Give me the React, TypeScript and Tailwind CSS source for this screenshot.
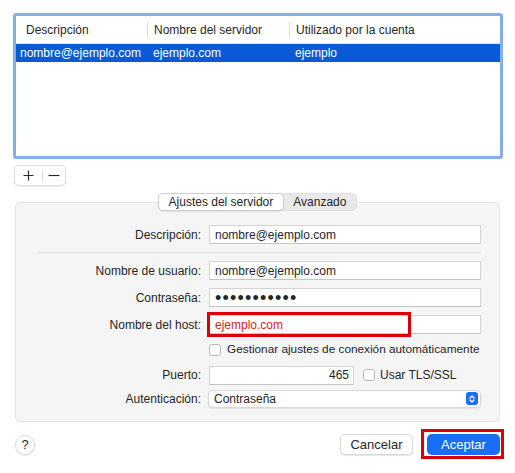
import React from 'react';

const inputCls =
  'h-[19px] bg-white border border-[#d4d4d4] border-b-[#c4c4c4] px-[5px] flex items-center text-[12px] text-[#262626]';

const Row: React.FC<{ label: string; className?: string; children: React.ReactNode }> = ({ label, className = '', children }) => (
  <div className={`flex items-center ${className}`}>
    <div className="w-[193px] text-right pr-[8px] text-[12px] text-[#262626]">{label}</div>
    {children}
  </div>
);

const Checkbox: React.FC = () => (
  <span className="w-[12px] h-[12px] bg-white border border-[#b8b8b8] rounded-[3px] shrink-0" />
);

export default function App() {
  return (
    <div
      className="w-[515px] h-[473px] bg-white text-[#262626] overflow-hidden"
      style={{ fontFamily: '"Liberation Sans", Arial, sans-serif' }}
    >
      {/* accounts table */}
      <div className="pt-[13px] pl-[13px]">
        <div className="w-[490px] h-[146px] border-[3px] border-[#86aeea] rounded-[3px] bg-white">
          <div className="h-[28px] flex items-center border-b border-[#e2e2e2] text-[12px]">
            <div className="w-[131px] pl-[10px]">Descripción</div>
            <div className="w-px h-[16px] bg-[#dcdcdc]" />
            <div className="w-[141px] pl-[6px]">Nombre del servidor</div>
            <div className="w-px h-[16px] bg-[#dcdcdc]" />
            <div className="pl-[6px]">Utilizado por la cuenta</div>
          </div>
          <div className="h-[18px] flex items-center bg-[#0a5ad6] text-white text-[12px]">
            <div className="w-[132px] pl-[4px]">nombre@ejemplo.com</div>
            <div className="w-[142px] pl-[5px]">ejemplo.com</div>
            <div className="pl-[5px]">ejemplo</div>
          </div>
        </div>
        {/* +/- */}
        <div className="mt-[6px] ml-[1px] w-[52px] h-[21px] flex items-center border border-[#dedede] rounded-[5px] bg-white shadow-[0_1px_1px_rgba(0,0,0,0.08)]">
          <div className="w-[27px] flex justify-center">
            <svg width="11" height="11" viewBox="0 0 11 11">
              <path d="M5.5 0.5v10M0.5 5.5h10" stroke="#2a2a2a" strokeWidth="1.2" />
            </svg>
          </div>
          <div className="w-px h-[12px] bg-[#dcdcdc]" />
          <div className="flex-1 flex justify-center">
            <svg width="12" height="11" viewBox="0 0 12 11">
              <path d="M0.5 5.5h11" stroke="#2a2a2a" strokeWidth="1.2" />
            </svg>
          </div>
        </div>
      </div>

      {/* tabs + group */}
      <div className="mt-[7px] pl-[15px]">
        <div className="relative z-10 flex justify-center w-[485px] -mb-[9px]">
          <div className="flex h-[18px] rounded-[5px] bg-[#e9e9e9] border border-[#e0e0e0] text-[12px]">
            <div className="px-[10px] flex items-center bg-white border border-[#cfcfcf] rounded-[5px] -m-px shadow-[0_1px_1px_rgba(0,0,0,0.08)]">
              Ajustes del servidor
            </div>
            <div className="px-[10px] flex items-center">Avanzado</div>
          </div>
        </div>
        <div className="w-[485px] h-[220px] bg-[#f5f5f5] border border-[#e4e4e4] rounded-[5px] pt-[22px]">
          <Row label="Descripción:">
            <div className={`${inputCls} w-[272px]`}>nombre@ejemplo.com</div>
          </Row>
          <div className="mt-[8px] ml-[21px] w-[444px] h-px bg-[#dedede]" />
          <Row label="Nombre de usuario:" className="mt-[8px]">
            <div className={`${inputCls} w-[272px]`}>nombre@ejemplo.com</div>
          </Row>
          <Row label="Contraseña:" className="mt-[8px]">
            <div className={`${inputCls} w-[272px] text-[18px] leading-none tracking-[1.2px]`}>•••••••••••</div>
          </Row>
          <Row label="Nombre del host:" className="mt-[8px]">
            <div className="relative">
              <div className={`${inputCls} w-[272px] text-[#d81e1e]`}>ejemplo.com</div>
              <div className="absolute -left-[2px] -top-[3px] w-[204px] h-[25px] border-[3px] border-[#d9000b]" />
            </div>
          </Row>
          <div className="mt-[7px] ml-[193px] flex items-center gap-[6px] text-[11.8px]">
            <Checkbox />
            <span>Gestionar ajustes de conexión automáticamente</span>
          </div>
          <Row label="Puerto:" className="mt-[7px]">
            <div className={`${inputCls} w-[145px] h-[18px] justify-end pr-[4px]`}>465</div>
            <div className="ml-[9px] flex items-center gap-[5px] text-[12px]">
              <Checkbox />
              <span>Usar TLS/SSL</span>
            </div>
          </Row>
          <Row label="Autenticación:" className="mt-[5px]">
            <div className="w-[273px] h-[18px] -ml-px bg-white border border-[#d8d8d8] rounded-[4px] shadow-[0_1px_1px_rgba(0,0,0,0.08)] flex items-center justify-between pl-[5px] pr-[2px] text-[12px]">
              <span>Contraseña</span>
              <span className="w-[12px] h-[13px] rounded-[3px] bg-[#1a6ef5] flex items-center justify-center">
                <svg width="8" height="10" viewBox="0 0 8 10">
                  <path d="M2 4l2-2 2 2M2 6l2 2 2-2" stroke="white" strokeWidth="1.3" fill="none" strokeLinecap="round" strokeLinejoin="round" />
                </svg>
              </span>
            </div>
          </Row>
        </div>
      </div>

      {/* footer */}
      <div className="mt-[12px] pl-[15px] pr-[15px] flex items-center">
        <div className="w-[20px] h-[20px] rounded-full bg-white border border-[#dcdcdc] shadow-[0_1px_1px_rgba(0,0,0,0.1)] flex items-center justify-center text-[13px]">
          ?
        </div>
        <div className="ml-auto flex items-center gap-[14px]">
          <div className="w-[73px] h-[21px] rounded-[5px] bg-white border border-[#d8d8d8] shadow-[0_1px_1px_rgba(0,0,0,0.1)] flex items-center justify-center text-[13px]">
            Cancelar
          </div>
          <div className="relative">
            <div className="w-[73px] h-[21px] rounded-[5px] bg-[#1a6ef5] text-white flex items-center justify-center text-[13px]">
              Aceptar
            </div>
            <div className="absolute -left-[6px] -top-[5px] w-[83px] h-[30px] border-[3px] border-[#d9000b]" />
          </div>
        </div>
      </div>
    </div>
  );
}
